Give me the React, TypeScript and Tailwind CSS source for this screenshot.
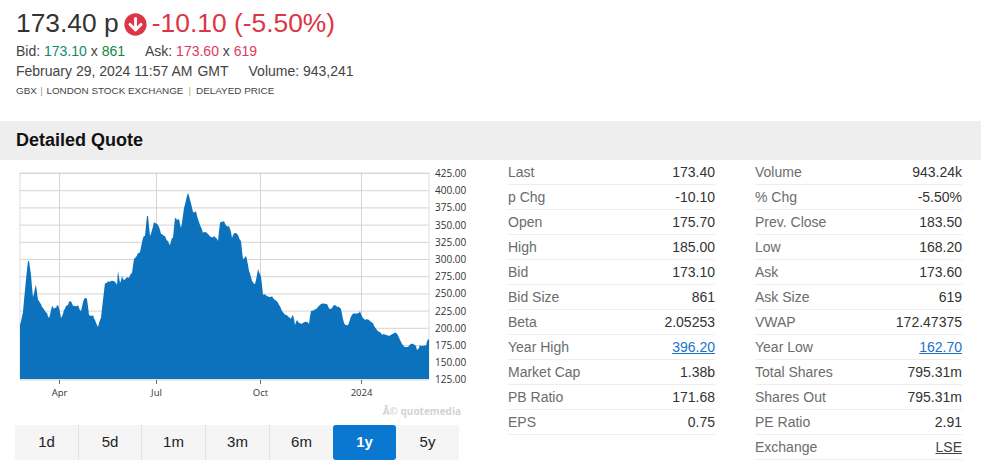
import { FaArrowCircleDown } from "react-icons/fa";

const leftRows: [string, string, string?][] = [
  ["Last", "173.40"],
  ["p Chg", "-10.10"],
  ["Open", "175.70"],
  ["High", "185.00"],
  ["Bid", "173.10"],
  ["Bid Size", "861"],
  ["Beta", "2.05253"],
  ["Year High", "396.20", "blue"],
  ["Market Cap", "1.38b"],
  ["PB Ratio", "171.68"],
  ["EPS", "0.75"],
];

const rightRows: [string, string, string?][] = [
  ["Volume", "943.24k"],
  ["% Chg", "-5.50%"],
  ["Prev. Close", "183.50"],
  ["Low", "168.20"],
  ["Ask", "173.60"],
  ["Ask Size", "619"],
  ["VWAP", "172.47375"],
  ["Year Low", "162.70", "blue"],
  ["Total Shares", "795.31m"],
  ["Shares Out", "795.31m"],
  ["PE Ratio", "2.91"],
  ["Exchange", "LSE", "dark"],
];

const ranges = [
  { label: "1d", width: "w-[64px]" },
  { label: "5d", width: "w-[63px]" },
  { label: "1m", width: "w-[64px]" },
  { label: "3m", width: "w-[64px]" },
  { label: "6m", width: "w-[63px]" },
  { label: "1y", width: "w-[63px]", active: true },
  { label: "5y", width: "w-[63px]" },
];

const yLabels = ["425.00", "400.00", "375.00", "350.00", "325.00", "300.00", "275.00", "250.00", "225.00", "200.00", "175.00", "150.00", "125.00"];

// traced from the one year price series
const trace: [number, number][] = [
  [20, 325], [23, 312], [25, 290], [28, 261], [29, 261], [31, 275], [33, 297], [35, 288], [36, 285], [38, 300], [40, 303], [42, 307],
  [45, 311], [47, 313], [49, 318], [52, 306], [54, 309], [56, 308], [58, 305], [60, 312], [61, 318], [64, 310], [66, 306], [68, 305],
  [70, 301], [73, 306], [78, 305], [79, 308], [81, 311], [84, 299], [87, 299], [89, 315], [93, 315], [95, 320], [97, 325], [98, 327],
  [101, 318], [103, 300], [105, 283], [108, 281], [113, 281], [117, 285], [118, 271], [120, 283], [122, 276], [124, 280], [126, 278],
  [129, 278], [132, 273], [134, 259], [138, 253], [140, 252], [143, 238], [145, 236], [147, 216], [148, 216], [150, 236], [154, 222],
  [158, 225], [161, 234], [165, 236], [168, 241], [170, 245], [172, 238], [173, 238], [175, 218], [177, 220], [179, 219], [181, 228],
  [184, 208], [188, 193], [190, 200], [193, 212], [196, 211], [199, 222], [203, 233], [207, 233], [212, 237], [214, 236], [216, 238],
  [218, 241], [220, 223], [224, 221], [227, 226], [229, 226], [231, 232], [232, 238], [235, 233], [238, 235], [241, 241], [243, 259],
  [246, 256], [249, 271], [252, 281], [255, 284], [258, 269], [261, 277], [263, 295], [267, 296], [272, 296], [275, 300], [279, 305],
  [282, 311], [287, 315], [291, 319], [293, 315], [295, 325], [297, 320], [300, 323], [305, 322], [309, 324], [311, 311], [315, 309],
  [320, 305], [327, 304], [330, 309], [334, 305], [337, 307], [341, 309], [344, 323], [348, 325], [352, 315], [358, 313], [360, 311],
  [363, 318], [365, 320], [370, 321], [373, 323], [378, 331], [382, 335], [387, 335], [392, 334], [396, 333], [400, 340], [403, 345],
  [408, 347], [412, 344], [416, 346], [417, 350], [420, 345], [424, 346], [426, 346], [428, 339], [429, 340],
];

// small day to day wobble so the edge is as jagged as the real series
function buildArea() {
  let d = "M20 379";
  for (let i = 0; i < trace.length - 1; i++) {
    const [x0, y0] = trace[i];
    const [x1, y1] = trace[i + 1];
    for (let x = x0; x < x1; x++) {
      const y = y0 + ((y1 - y0) * (x - x0)) / (x1 - x0);
      const wobble = x === x0 ? 0 : Math.sin(x * 12.9898) * 1.1;
      d += ` L${x} ${(y + wobble).toFixed(1)}`;
    }
  }
  return d + " L429 340 L429 379 Z";
}

const area = buildArea();

function Chart() {
  return (
    <svg className="block" width="480" height="265" viewBox="0 160 480 265">
      <rect x="20" y="173" width="409" height="206" fill="none" stroke="#dddddd" strokeWidth="1" />
      {yLabels.map((label, i) => (
        <g key={label}>
          <line x1="20" x2="429" y1={173.5 + i * 17.2} y2={173.5 + i * 17.2} stroke="#d4d4d4" strokeWidth="1" />
          <text x="435" y={177 + i * 17.2} fontSize="10" fill="#333333" fontFamily="'Open Sans', sans-serif">
            {label}
          </text>
        </g>
      ))}
      {[59, 156, 260, 361].map((x) => (
        <line key={x} x1={x + 0.5} x2={x + 0.5} y1="173" y2="379" stroke="#d4d4d4" strokeWidth="1" />
      ))}
      <path d={area} fill="#0c72bd" />
      {[
        { x: 59, label: "Apr" },
        { x: 156, label: "Jul" },
        { x: 260, label: "Oct" },
        { x: 361, label: "2024" },
      ].map((t) => (
        <g key={t.label}>
          <line x1={t.x + 0.5} x2={t.x + 0.5} y1="380" y2="384" stroke="#666666" strokeWidth="1" />
          <text x={t.x + 0.5} y="396" fontSize="9.5" fill="#333333" textAnchor="middle" fontFamily="'Open Sans', sans-serif">
            {t.label}
          </text>
        </g>
      ))}
      <text x="461" y="415" fontSize="10" fontWeight="700" fill="#d3d3d3" textAnchor="end" fontFamily="'Open Sans', sans-serif">
        Â© quotemedia
      </text>
    </svg>
  );
}

function QuoteTable({ rows }: { rows: [string, string, string?][] }) {
  return (
    <div className="w-[207px]">
      {rows.map(([label, value, kind]) => (
        <div key={label} className="flex h-[25px] items-center justify-between border-b border-[#eeeeee] text-[14px]">
          <span className="text-[#6c6c6c]">{label}</span>
          {kind === "blue" ? (
            <a className="text-[#1a73c8] underline">{value}</a>
          ) : kind === "dark" ? (
            <a className="text-[#444444] underline">{value}</a>
          ) : (
            <span className="text-[#333333]">{value}</span>
          )}
        </div>
      ))}
    </div>
  );
}

export default function App() {
  return (
    <div className="h-[476px] w-[981px] overflow-hidden bg-white font-['Liberation_Sans',Arial,sans-serif]">
      <div className="h-[121px] px-4 pt-[7px]">
        <div className="flex h-[34px] items-center text-[26.4px]">
          <span className="text-[#333333]">173.40 p</span>
          <FaArrowCircleDown className="ml-[5px] mr-[5px] text-[#dc3545]" size={23} />
          <span className="text-[#dc3545]">-10.10 (-5.50%)</span>
        </div>
        <div className="flex h-[20px] items-center text-[14px] text-[#444444]">
          <span>
            Bid: <span className="text-[#0d8a6a]">173.10</span> x <span className="text-[#0a8a3c]">861</span>
          </span>
          <span className="ml-[20px]">
            Ask: <span className="text-[#e0385f]">173.60</span> x <span className="text-[#e0385f]">619</span>
          </span>
        </div>
        <div className="flex h-[20px] items-center text-[14px] text-[#444444]">
          <span>February 29, 2024 11:57 AM</span>
          <span className="ml-[5px]">GMT</span>
          <span className="ml-[20px]">Volume: 943,241</span>
        </div>
        <div className="mt-[2px] flex items-center text-[9.9px] leading-[16px] text-[#444444]">
          <span>GBX</span>
          <span className="mx-[3.5px] text-[#999999]">|</span>
          <span>LONDON STOCK EXCHANGE</span>
          <span className="mx-[5px] text-[#c9a76a]">|</span>
          <span>DELAYED PRICE</span>
        </div>
      </div>
      <div className="flex h-[39px] items-center bg-[#eeeeee] px-4 text-[18px] font-bold text-[#111111]">
        Detailed Quote
      </div>
      <div className="flex">
        <div className="w-[508px]">
          <Chart />
          <div className="ml-[15px] flex h-[35px] w-[444px] bg-[#f5f5f5]">
            {ranges.map((r, i) =>
              r.active ? (
                <div key={r.label} className={`flex ${r.width} items-center justify-center rounded-[3px] bg-[#0a78d1] text-[15px] font-bold text-white`}>
                  {r.label}
                </div>
              ) : (
                <div
                  key={r.label}
                  className={
                    i < 4
                      ? `flex ${r.width} items-center justify-center border-r border-[#e2e2e2] text-[15px] text-[#222222]`
                      : `flex ${r.width} items-center justify-center text-[15px] text-[#222222]`
                  }
                >
                  {r.label}
                </div>
              ),
            )}
          </div>
        </div>
        <QuoteTable rows={leftRows} />
        <div className="ml-[40px]">
          <QuoteTable rows={rightRows} />
        </div>
      </div>
    </div>
  );
}
